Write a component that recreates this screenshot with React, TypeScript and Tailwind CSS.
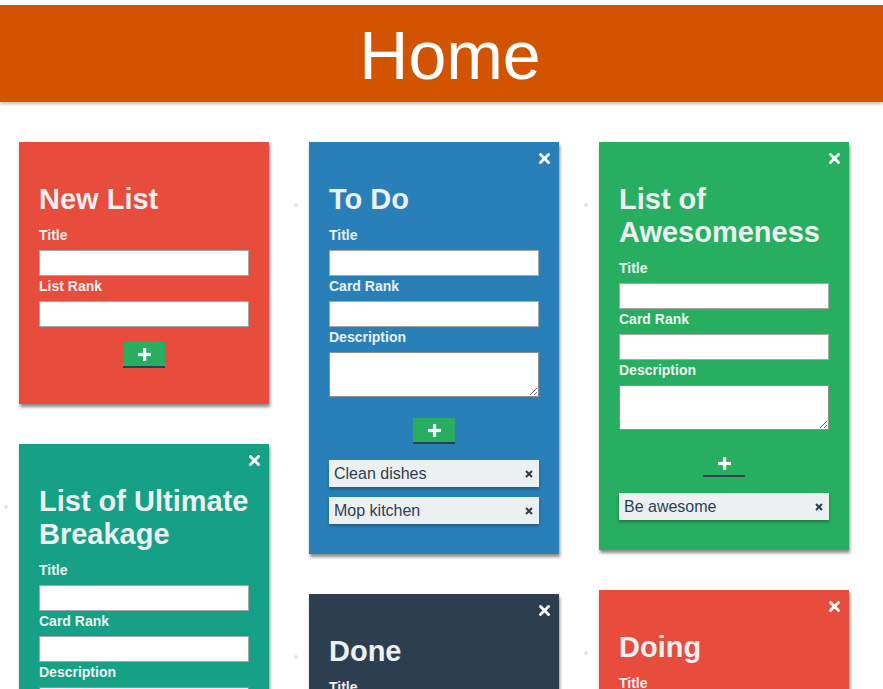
type CardProps = {
  title: string;
  bg: string;
  rankLabel: string;
  description?: boolean;
  items?: string[];
  close?: boolean;
  dot?: boolean;
  plainButton?: boolean;
};

function Plus() {
  return (
    <svg width="13" height="13" viewBox="0 0 13 13" fill="#ffffff">
      <rect x="5" y="0" width="3.2" height="13" />
      <rect x="0" y="4.9" width="13" height="3.2" />
    </svg>
  );
}

function Card({ title, bg, rankLabel, description, items = [], close, dot, plainButton }: CardProps) {
  return (
    <div className={`relative w-[250px] px-5 pt-[41px] pb-5 shadow-[1px_3px_3px_rgba(0,0,0,0.45)] ${bg}`}>
      {dot && <span className="absolute -left-[15px] top-[61px] h-[4px] w-[4px] rounded-full bg-[#e4e4e4]" />}
      {close && (
        <button className="absolute right-[9px] top-[11px]">
          <svg width="11" height="11" viewBox="0 0 11 11" stroke="#ffffff" strokeWidth="2.8" strokeLinecap="square">
            <path d="M1.5 1.5L9.5 9.5M9.5 1.5L1.5 9.5" />
          </svg>
        </button>
      )}
      <h2 className="text-[29px] font-bold leading-[33px] text-[#ecf0f1]">{title}</h2>
      <form className="mt-[9px] mb-4">
        <label className="block text-[14px] font-bold leading-5 text-[#ecf0f1]">Title</label>
        <input className="mt-[5px] block h-[26px] w-full border border-[#a6a6a6] bg-white" />
        <label className="block text-[14px] font-bold leading-5 text-[#ecf0f1]">{rankLabel}</label>
        <input className="mt-[5px] block h-[26px] w-full border border-[#a6a6a6] bg-white" />
        {description && (
          <>
            <label className="block text-[14px] font-bold leading-5 text-[#ecf0f1]">Description</label>
            <textarea className="mt-[5px] block h-[45px] w-full border border-[#8f8f8f] bg-white" />
          </>
        )}
        <div className={`flex justify-center ${description ? "mt-[21px]" : "mt-[15px]"}`}>
          <button
            type="button"
            className={`flex h-[26px] w-[42px] items-center justify-center border-b-2 border-[#2c3e50] ${plainButton ? "bg-transparent" : "bg-[#27ae60]"}`}
          >
            <Plus />
          </button>
        </div>
      </form>
      {items.map((item) => (
        <div
          key={item}
          className="mb-[10px] flex h-[27px] items-center justify-between bg-[#ecf0f1] pl-[5px] pr-[6px] pt-px text-[16px] text-[#2c3e50] shadow-[0_2px_3px_rgba(0,0,0,0.3)]"
        >
          <span>{item}</span>
          <svg width="8" height="8" viewBox="0 0 8 8" stroke="#2c3e50" strokeWidth="2">
            <path d="M1 1L7 7M7 1L1 7" />
          </svg>
        </div>
      ))}
    </div>
  );
}

export default function App() {
  return (
    <main className="min-h-screen bg-white pt-[5px] font-['Liberation_Sans',Arial,sans-serif]">
      <header className="flex h-[97px] items-center justify-center bg-[#d35400] pl-[17px] pt-[3px] shadow-[0_2px_3px_rgba(0,0,0,0.25)]">
        <h1 className="text-[68px] font-normal leading-none text-white">Home</h1>
      </header>
      <div className="flex gap-10 pl-[19px] pt-10">
        <div className="flex w-[250px] flex-col gap-10">
          <Card title="New List" bg="bg-[#e74c3c]" rankLabel="List Rank" />
          <Card title="List of Ultimate Breakage" bg="bg-[#16a085]" rankLabel="Card Rank" description close dot />
        </div>
        <div className="flex w-[250px] flex-col gap-10">
          <Card
            title="To Do"
            bg="bg-[#2980b9]"
            rankLabel="Card Rank"
            description
            close
            dot
            items={["Clean dishes", "Mop kitchen"]}
          />
          <Card title="Done" bg="bg-[#2c3e50]" rankLabel="Card Rank" description close dot />
        </div>
        <div className="flex w-[250px] flex-col gap-10">
          <Card
            title="List of Awesomeness"
            bg="bg-[#27ae60]"
            rankLabel="Card Rank"
            description
            close
            dot
            plainButton
            items={["Be awesome"]}
          />
          <Card title="Doing" bg="bg-[#e74c3c]" rankLabel="Card Rank" description close dot />
        </div>
      </div>
    </main>
  );
}
